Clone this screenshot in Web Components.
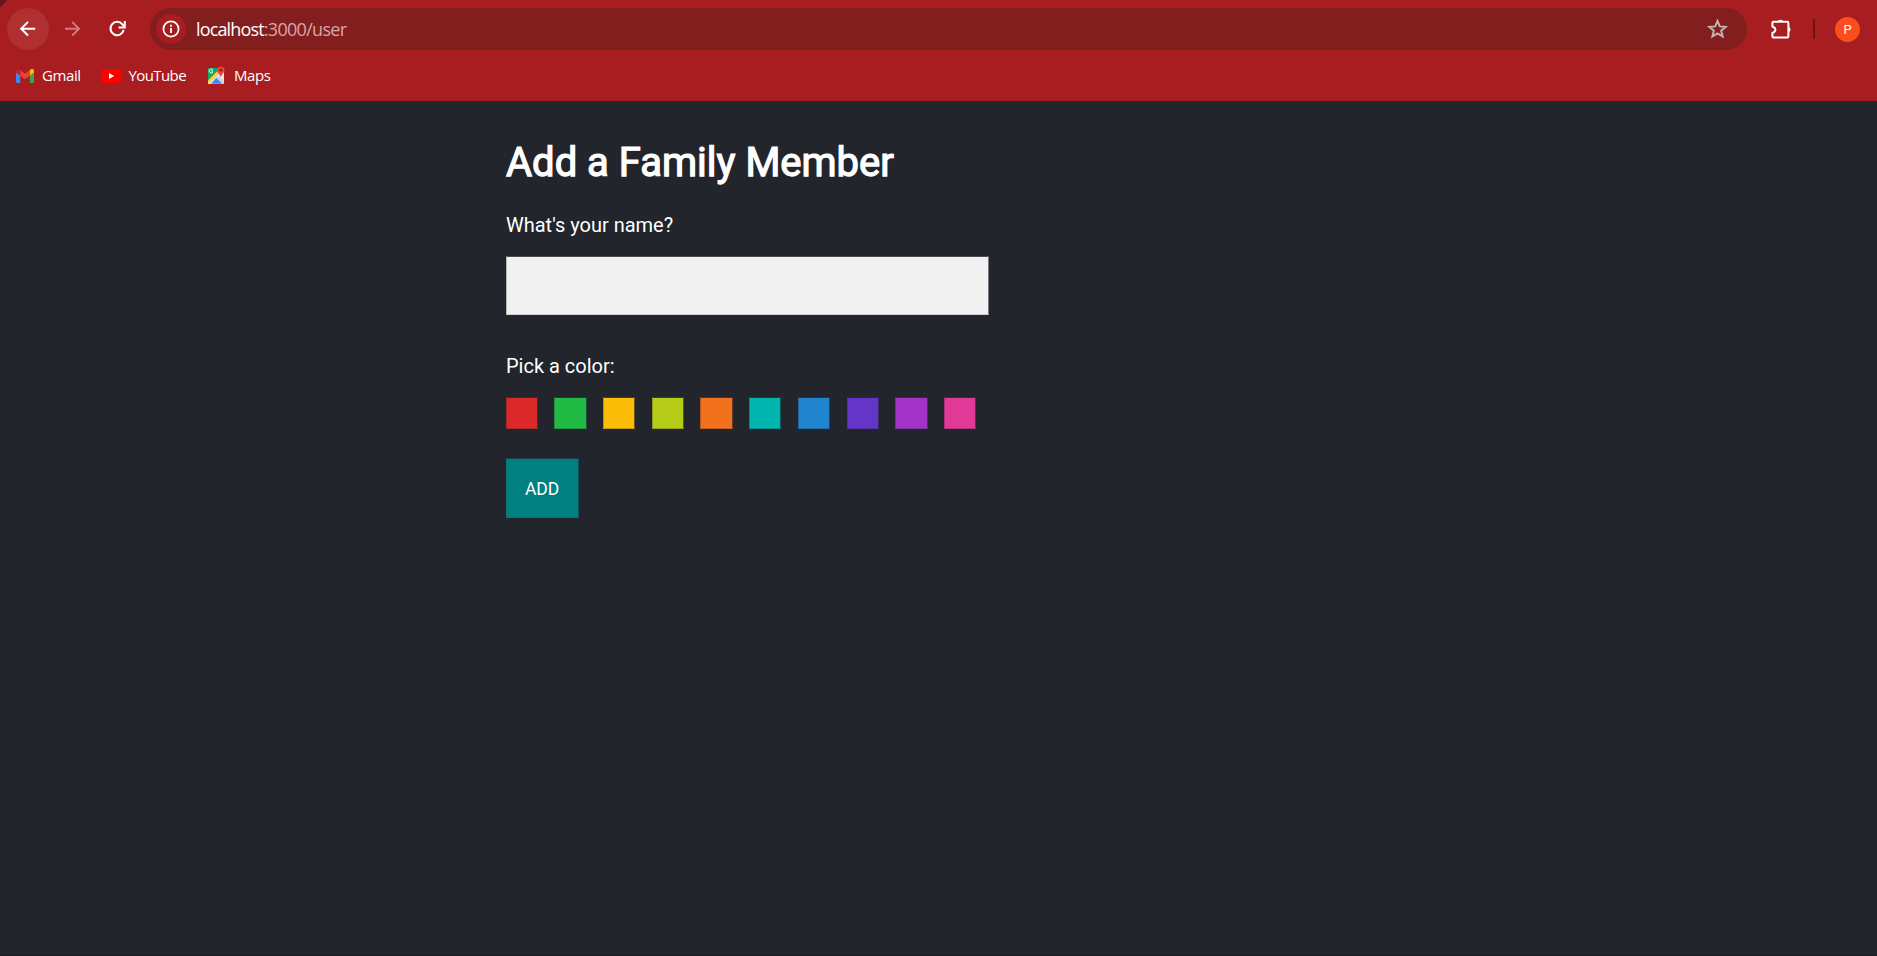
<!DOCTYPE html>
<html lang="en">
<head>
<meta charset="utf-8">
<title>Family Travel Tracker</title>
<style>
html,body{margin:0;height:100%;background:#22252c;overflow:hidden}
body{font-family:Roboto,sans-serif}
</style>
</head>
<body>
<app-window></app-window>
<script>
const define=(name,html,setup)=>customElements.define(name,class extends HTMLElement{
  constructor(){
    super();
    const t=document.createElement('template');
    t.innerHTML=html;
    this.attachShadow({mode:'open'}).append(t.content.cloneNode(true));
  }
  connectedCallback(){if(setup)setup(this,this.shadowRoot)}
});

define('nav-button',`<style>
:host{display:flex;width:42px;height:42px;border-radius:50%;align-items:center;justify-content:center}
:host([active]){background:#b03031}
:host([muted]) svg{opacity:.42}
svg{display:block}
</style><svg width="20" height="20" viewBox="0 0 20 20" fill="none" stroke="#fff" stroke-width="2"></svg>`,(el,r)=>{
  const shapes={
    back:'<path d="M17.2 9.7H3.7M10 2.9 3.2 9.7l6.8 6.8"/>',
    forward:'<path d="M2 9.7h13.5M9.2 2.9l6.8 6.8-6.8 6.8"/>',
    reload:'<path d="M15.7 11.1A6.7 6.7 0 1 1 14.4 5.3l1.9 2.2" stroke-width="2.1"/><path d="M16.8 1.9v6.5h-6.3" stroke-width="2"/>'
  };
  r.querySelector('svg').innerHTML=shapes[el.getAttribute('kind')];
});

define('address-bar',`<style>
:host{display:flex;align-items:center;width:1597px;height:42px;border-radius:21px;background:#831e1f;box-sizing:border-box;padding:0 19px 0 6px}
.site{width:30px;height:30px;border-radius:50%;background:#a81d1f;display:flex;align-items:center;justify-content:center}
.url{margin:0 0 0 10px;font:18px/24px "Open Sans",sans-serif;color:#d9a5a5;white-space:pre;flex:1;display:flex}
.host{color:#fff;letter-spacing:-.85px}.path{letter-spacing:-.7px}
svg{display:block}
</style>
<span class="site"><svg width="18" height="18" viewBox="0 0 18 18"><circle cx="9" cy="9" r="7.6" fill="none" stroke="#fff" stroke-width="1.8"/><path d="M9 8v5M9 4.8v1.9" stroke="#fff" stroke-width="1.8"/></svg></span>
<span class="url"><span class="host">localhost</span><span class="path">:3000/user</span></span>
<svg width="21" height="20" viewBox="0 0 21 20"><path d="M10.5 2 12.8 7.4l5.9.5-4.5 3.8 1.4 5.7-5.1-3-5.1 3 1.4-5.7-4.5-3.8 5.9-.5z" fill="none" stroke="#c3b0b0" stroke-width="2"/></svg>`);

define('book-mark',`<style>
:host{display:flex;align-items:center;height:24px;font:15px/24px "Open Sans",sans-serif;color:#fff;white-space:nowrap}
span{letter-spacing:var(--track,-.5px);margin-top:-2px}
slot[name=icon]{display:flex}
</style><slot name="icon"></slot><span><slot></slot></span>`);

define('browser-chrome',`<style>
:host{display:flex;flex-direction:column;height:101px;background:linear-gradient(135deg,#681316 5px,transparent 5px) 0 0/10px 10px no-repeat,#a81d1f;box-sizing:border-box;padding-top:8px}
.tools{display:flex;align-items:center;height:42px;padding-left:7px}
nav-button+nav-button{margin-left:3px}
address-bar{margin-left:11px}
.puzzle{margin-left:23px}
.rule{width:2px;height:20px;margin-left:20px;background:#6b1416}
.avatar{width:25px;height:25px;border-radius:50%;background:#fa4f1c;color:#fff;margin-left:20px;font:13px/25px Roboto,sans-serif;text-align:center}
.marks{display:flex;padding:14px 0 0 16px;align-items:center}
svg{display:block}
</style>
<div class="tools">
<nav-button kind="back" active></nav-button><nav-button kind="forward" muted></nav-button><nav-button kind="reload"></nav-button>
<address-bar></address-bar>
<svg class="puzzle" width="23" height="22" viewBox="0 0 23 22"><path d="M3.4 3.7H17.2q1.2 0 1.2 1.2v13.4q0 1.2-1.2 1.2H3.4q-1 0-1-1v-3.6q3-.9 3-3.1T2.4 8.5V4.7q0-1 1-1z" fill="none" stroke="#fff" stroke-width="2" stroke-linejoin="round"/><path d="M7.8 3.6a2.9 2.9 0 0 1 5.4 0zM18.5 8.7a2.8 2.8 0 0 1 0 5.4z" fill="#fff"/></svg>
<span class="rule"></span><span class="avatar">P</span>
</div>
<div class="marks">
<book-mark style="width:85px;--track:-.4px"><svg slot="icon" style="margin-right:8px" width="18" height="14" viewBox="0 0 18 14"><path d="M0 3v9.8Q0 14 1.2 14h3V6z" fill="#4285f4"/><path d="M13.8 6v8h3q1.2 0 1.2-1.2V3z" fill="#34a853"/><path d="M13.8 1v5.7L18 3.6V2c0-2-2-2.6-3.4-1.6z" fill="#fbbc04"/><path d="M4.2 6.7V1L9 4.7 13.8 1v5.7L9 10.3z" fill="#ea4335"/><path d="M0 2v1.6l4.2 3.1V1l-.8-.6C2-.6 0 0 0 2z" fill="#c5221f"/></svg>Gmail</book-mark>
<book-mark style="width:106px;--track:-.6px"><svg slot="icon" style="margin-right:7.5px" width="20" height="14" viewBox="0 0 20 14"><rect width="20" height="14" rx="3.4" fill="#f00"/><path d="M8 4v6l5.2-3z" fill="#fff"/></svg>YouTube</book-mark>
<book-mark style="--track:-.45px"><svg slot="icon" style="margin-right:8px;margin-top:-2px" width="19" height="18" viewBox="0 0 19 18"><path d="M1 2h15v16H1z" fill="#1da462"/><path d="M1 16 15 2.5h2V18H1z" fill="#e8e8e8"/><path d="m1 14.5 10-10 2 2L2 17.8H1z" fill="#fdd23c"/><path d="m4 17.8 5.3-6 6 6z" fill="#4285f4"/><path d="m11 9.5 6 6V18h-1.5L9.3 11.5z" fill="#cfd1d3"/><path d="M6 5.1H4.3M5.9 4A2 2 0 1 0 6 6" fill="none" stroke="#fff"/><path d="M13.8.5a3.7 3.7 0 0 0-3.7 3.8c0 2.8 3.1 3.8 3.7 7.2.6-3.4 3.7-4.4 3.7-7.2A3.7 3.7 0 0 0 13.8.5z" fill="#ea4335"/><circle cx="13.8" cy="4.2" r="1.4" fill="#8c1b16"/></svg>Maps</book-mark>
</div>`);

define('color-swatch',`<style>
:host{display:block;box-sizing:border-box;width:32.25px;height:32px;background:var(--c);border:1px solid;border-color:rgba(34,37,45,.84) rgba(34,37,45,.68) rgba(34,37,45,.23) rgba(34,37,45,.3)}
</style>`,el=>el.style.setProperty('--c',el.getAttribute('color')));

define('member-form',`<style>
:host{display:flex;flex-direction:column;align-items:flex-start;padding:38px 0 0 505.6px;color:#fff}
h1{margin:0;font:400 40px/48px Roboto,sans-serif;-webkit-text-stroke:1.25px #fff;letter-spacing:0;white-space:nowrap;padding-left:.4px}
label{font-size:20px;line-height:24px;white-space:nowrap;padding-left:.4px}
.name{margin-top:26px}
input{display:block;box-sizing:border-box;width:483px;height:59px;margin:19px 0 0;padding:0 18px;border-radius:0;outline:0;background:#f1f1f1;border:1px solid;border-color:#4b4e54 #777a7e #d0d0d0 #b5b6b8;font:18px Roboto}
.pick{margin-top:39px}
.swatches{display:flex;gap:16.47px;margin-top:19px}
button{margin:29px 0 0;padding:2px 0 0;box-sizing:border-box;width:73px;height:60px;border:1px solid;border-color:#164248 #134f54 #087277 #087277;background:teal;color:#fff;border-radius:0;font:400 17.5px/56px Roboto,sans-serif}
</style>
<h1>Add a Family Member</h1>
<label class="name" for="n">What's your name?</label>
<input id="n" type="text">
<label class="pick">Pick a color:</label>
<div class="swatches"></div>
<button>ADD</button>`,(el,r)=>{
  r.querySelector('.swatches').innerHTML=['#db2828','#21ba45','#fbbd08','#b5cc18','#f2711c','#00b5ad','#2185d0','#6435c9','#a333c8','#e03997'].map(c=>`<color-swatch color="${c}"></color-swatch>`).join('');
});

define('app-window',`<style>
:host{display:flex;flex-direction:column;height:100vh;box-sizing:border-box;background:#22252c;border-bottom:1px solid #1c1e24}
</style><browser-chrome></browser-chrome><member-form></member-form>`);
</script>
</body>
</html>
